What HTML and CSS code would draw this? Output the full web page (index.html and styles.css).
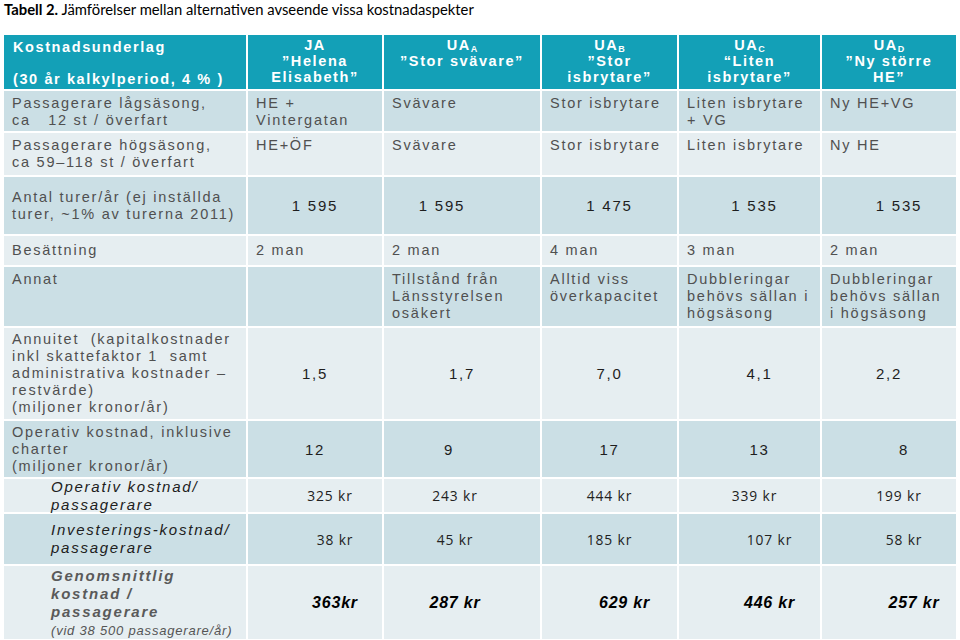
FILE: index.html
```html
<!DOCTYPE html>
<html lang="sv">
<head>
<meta charset="utf-8">
<title>Tabell 2</title>
<link rel="stylesheet" href="styles.css">
</head>
<body>
<div class="page">
  <p class="title"><b>Tabell 2.</b> Jämförelser mellan alternativen avseende vissa kostnadaspekter</p>
  <div class="grid">
    <div class="row head">
      <div class="c hd first"><div>Kostnadsunderlag<br>&nbsp;<br>(30 år kalkylperiod, 4 % )</div></div>
      <div class="c hd"><div>JA<br>”Helena<br>Elisabeth”</div></div>
      <div class="c hd"><div>UA<sub>A</sub><br>”Stor svävare”</div></div>
      <div class="c hd"><div>UA<sub>B</sub><br>”Stor<br>isbrytare”</div></div>
      <div class="c hd"><div>UA<sub>C</sub><br>“Liten<br>isbrytare”</div></div>
      <div class="c hd"><div>UA<sub>D</sub><br>”Ny större<br>HE”</div></div>
    </div>
    <div class="row dark">
      <div class="c top">Passagerare lågsäsong,<br>ca &nbsp; 12 st / överfart</div>
      <div class="c top">HE +<br>Vintergatan</div>
      <div class="c top">Svävare</div>
      <div class="c top">Stor isbrytare</div>
      <div class="c top">Liten isbrytare<br>+ VG</div>
      <div class="c top">Ny HE+VG</div>
    </div>
    <div class="row light">
      <div class="c top">Passagerare högsäsong,<br>ca 59–118 st / överfart</div>
      <div class="c top">HE+ÖF</div>
      <div class="c top">Svävare</div>
      <div class="c top">Stor isbrytare</div>
      <div class="c top">Liten isbrytare</div>
      <div class="c top">Ny HE</div>
    </div>
    <div class="row dark">
      <div class="c">Antal turer/år (ej inställda<br>turer, ~1% av turerna 2011)</div>
      <div class="c n">1 595</div>
      <div class="c n s-l20">1 595</div>
      <div class="c n">1 475</div>
      <div class="c n s-r5">1 535</div>
      <div class="c n s-r10">1 535</div>
    </div>
    <div class="row light">
      <div class="c">Besättning</div>
      <div class="c">2 man</div>
      <div class="c">2 man</div>
      <div class="c">4 man</div>
      <div class="c">3 man</div>
      <div class="c">2 man</div>
    </div>
    <div class="row dark">
      <div class="c top">Annat</div>
      <div class="c top"></div>
      <div class="c top">Tillstånd från<br>Länsstyrelsen<br>osäkert</div>
      <div class="c top">Alltid viss<br>överkapacitet</div>
      <div class="c top">Dubbleringar<br>behövs sällan i<br>högsäsong</div>
      <div class="c top">Dubbleringar<br>behövs sällan<br>i högsäsong</div>
    </div>
    <div class="row light">
      <div class="c">Annuitet &nbsp;(kapitalkostnader<br>inkl skattefaktor 1 &nbsp;samt<br>administrativa kostnader –<br>restvärde)<br>(miljoner kronor/år)</div>
      <div class="c n">1,5</div>
      <div class="c n">1,7</div>
      <div class="c n">7,0</div>
      <div class="c n s-r10">4,1</div>
      <div class="c n">2,2</div>
    </div>
    <div class="row dark">
      <div class="c">Operativ kostnad, inklusive<br>charter<br>(miljoner kronor/år)</div>
      <div class="c n">12</div>
      <div class="c n s-l13">9</div>
      <div class="c n">17</div>
      <div class="c n s-r10">13</div>
      <div class="c n s-r15">8</div>
    </div>
    <div class="row light">
      <div class="c it">Operativ kostnad/<br>passagerare</div>
      <div class="c n kr s-r15">325 kr</div>
      <div class="c n kr s-l7">243 kr</div>
      <div class="c n kr">444 kr</div>
      <div class="c n kr s-r5">339 kr</div>
      <div class="c n kr s-r10">199 kr</div>
    </div>
    <div class="row dark">
      <div class="c it">Investerings-kostnad/<br>passagerare</div>
      <div class="c n kr s-r20">38 kr</div>
      <div class="c n kr s-l7">45 kr</div>
      <div class="c n kr">185 kr</div>
      <div class="c n kr s-r20">107 kr</div>
      <div class="c n kr s-r15">58 kr</div>
    </div>
    <div class="row light">
      <div class="c it bi"><div>Genomsnittlig<br>kostnad /<br>passagerare<br><span class="note">(vid 38 500 passagerare/år)</span></div></div>
      <div class="c n tot s-r20">363kr</div>
      <div class="c n tot s-l7">287 kr</div>
      <div class="c n tot s-r15">629 kr</div>
      <div class="c n tot s-r20">446 kr</div>
      <div class="c n tot s-r25">257 kr</div>
    </div>
  </div>
</div>
</body>
</html>
```
FILE: styles.css
```css
html, body {
  margin: 0;
  padding: 0;
  background: #ffffff;
}

.page {
  padding: 0 4px;
  width: 952px;
}

.title {
  margin: 0;
  padding-top: 1px;
  height: 34px;
  font-family: Lato, "Open Sans", sans-serif;
  font-size: 14.8px;
  line-height: 16px;
  color: #000;
}

.title b {
  font-weight: bold;
}

.grid {
  display: grid;
  grid-template-columns: 242px 134px 156px 135px 141px 134px;
  grid-template-rows: 54px 40px 42px 57px 29px 59px 91px 56px 33px 50px 73px;
  gap: 2px;
  background: #ffffff;
}

.row {
  display: contents;
}

.c {
  display: flex;
  flex-direction: column;
  justify-content: center;
  padding: 0 8px;
  font-family: "Liberation Sans", Arial, sans-serif;
  font-size: 14.5px;
  line-height: 17px;
  letter-spacing: 1.75px;
  color: #505050;
  white-space: nowrap;
  overflow: visible;
}

.row.dark > .c {
  background: #cbdfe5;
}

.row.light > .c {
  background: #e6eef1;
}

.row.head > .c {
  background: #13a0b7;
}

.hd {
  justify-content: flex-start;
  padding-top: 2px;
  color: #ffffff;
  font-weight: bold;
  line-height: 16px;
  text-align: center;
  letter-spacing: 1.6px;
}

.hd.first {
  text-align: left;
  padding-top: 4px;
  padding-left: 9px;
}

.hd sub {
  font-size: 9px;
  line-height: 0;
  vertical-align: -2px;
  letter-spacing: 0;
}

.top {
  justify-content: flex-start;
  padding-top: 4px;
}

.n {
  text-align: center;
  color: #1e1e1e;
  font-size: 15px;
}

.kr {
  font-family: "Open Sans", Lato, sans-serif;
  font-size: 13.8px;
  letter-spacing: 0.9px;
  color: #222;
}

.tot {
  font-size: 16px;
  font-weight: bold;
  font-style: italic;
  letter-spacing: 0.8px;
  color: #000;
}

.it {
  padding-left: 47px;
  font-style: italic;
  font-size: 15px;
  line-height: 18px;
  color: #202020;
}

.bi {
  font-weight: bold;
  color: #5a5a5a;
  letter-spacing: 1.8px;
}

.note {
  font-weight: normal;
  font-size: 13px;
  line-height: 15px;
  letter-spacing: 0.8px;
  color: #555;
}

.s-r5 { padding-left: 18px; }
.s-r10 { padding-left: 28px; }
.s-r15 { padding-left: 38px; }
.s-r20 { padding-left: 48px; }
.s-r25 { padding-left: 58px; }
.s-l7 { padding-right: 22px; }
.s-l13 { padding-right: 34px; }
.s-l20 { padding-right: 48px; }
```
